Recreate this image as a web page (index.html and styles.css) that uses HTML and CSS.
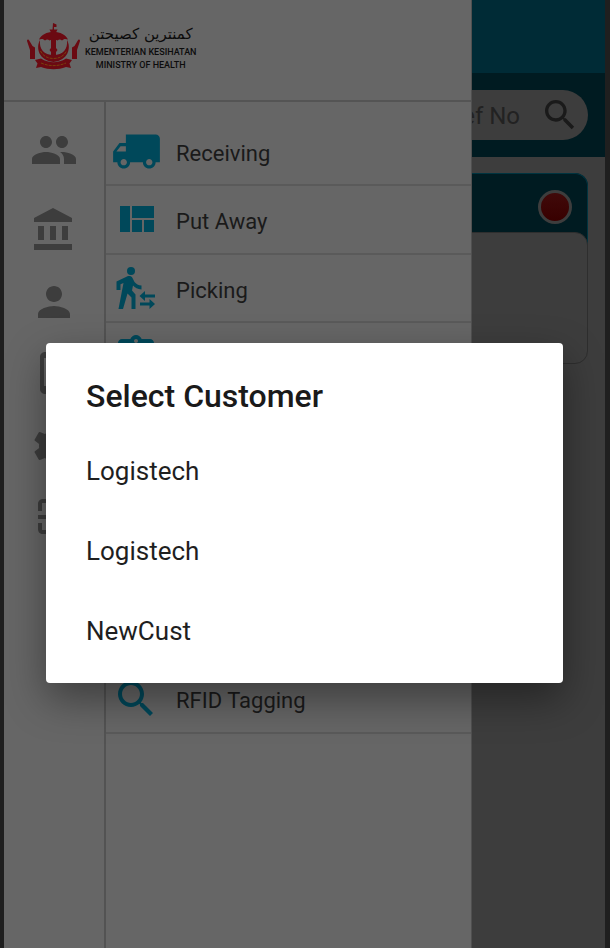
FILE: index.html
```html
<!DOCTYPE html>
<html lang="en">
<head>
<meta charset="utf-8">
<meta name="viewport" content="width=device-width, initial-scale=1">
<title>Select Customer</title>
<link rel="stylesheet" href="styles.css">
</head>
<body>
<div class="app">
  <main class="page">
    <header class="topbar"></header>
    <form class="search">
      <div class="pill">
        <input class="pill-input" type="text" placeholder="Ref No" aria-label="Ref No">
        <button class="pill-button" type="button" aria-label="Search">
          <svg viewBox="0 0 24 24"><path d="M15.5 14h-.79l-.28-.27C15.41 12.59 16 11.11 16 9.500 16 5.910 13.090 3 9.500 3S3 5.910 3 9.500 5.910 16 9.500 16c1.610 0 3.090-.59 4.230-1.570l.27.28v.79l5 4.990L20.490 19l-4.990-5zm-6 0C7.010 14 5 11.990 5 9.500S7.010 5 9.500 5 14 7.010 14 9.500 11.990 14 9.500 14z"/></svg>
        </button>
      </div>
    </form>
    <section class="order">
      <div class="order-head"><span class="status"></span></div>
      <div class="order-body"></div>
    </section>
  </main>

  <aside class="drawer">
    <div class="brand">
      <svg class="crest" viewBox="0 0 54 48">
        <g class="crest-red">
          <path d="M26 1l3.500 1.500v2.500H27v3h-1.500z"/>
          <path d="M22.500 7.500h8l-1.500 3h-5z"/>
          <path d="M12 17.500c2.500-5 7.500-7.500 14.500-7.500S38.500 12.500 41 17.500c-3-1-4.500-.5-6 1-1.500-1.500-3-1.500-4.500 0-.5-.5-1-.7-1.500-.5V26l1.500 2-1.500 2v7h-5v-7L22.500 28l1.500-2v-8c-.5-.2-1 0-1.500.5-1.500-1.500-3-1.500-4.500 0-1.500-1.500-3-2-6-1z"/>
          <path d="M13 18C8.500 26 12 38.500 26.500 40 41 38.500 44.500 26 40 18c1 9-4 15-13.500 15S12 27 13 18z"/>
          <path d="M8 38l6-1.500c8 5 17 5 25 0l6 1.500-2.500 3.500 1.500 4.500-5-1c-8 3-17 3-25 0l-5 1 1.500-4.500z"/>
          <path d="M0 19c0-1.500 1.500-2 2.200-.5l3.300 5.500 2.500 1.500V37H3v-9z"/>
          <path d="M53 19c0-1.500-1.500-2-2.200-.5L47.500 24 45 25.500V37h5v-9z"/>
        </g>
        <path class="crest-gold" d="M13.500 29c2.500 5 7 7.500 13 7.500s10.500-2.500 13-7.500M14 41c8 3.500 17 3.500 25 0"/>
      </svg>
      <div class="brand-text">
        <span class="jawi" lang="ms-Arab" dir="rtl">كمنترين كصيحتن</span>
        <span class="latin">KEMENTERIAN KESIHATAN</span>
        <span class="latin">MINISTRY OF HEALTH</span>
      </div>
    </div>
    <div class="drawer-body">
      <nav class="rail" aria-label="Sections">
        <a href="#" class="rail-first" aria-label="Customers"><svg viewBox="0 0 24 24"><path d="M16 11c1.660 0 2.990-1.340 2.990-3S17.660 5 16 5s-3 1.340-3 3 1.340 3 3 3zm-8 0c1.660 0 2.990-1.340 2.990-3S9.660 5 8 5 5 6.340 5 8s1.340 3 3 3zm0 2c-2.330 0-7 1.170-7 3.500V19h14v-2.500c0-2.330-4.670-3.500-7-3.500zm8 0c-.29 0-.62.02-.97.05 1.160.84 1.970 1.970 1.970 3.450V19h6v-2.500c0-2.330-4.670-3.500-7-3.500z"/></svg></a>
        <a href="#" aria-label="Warehouse"><svg viewBox="0 0 24 24"><path d="M4 10v7h3v-7H4zm6 0v7h3v-7h-3zM2 22h19v-3H2v3zm14-12v7h3v-7h-3zM11.500 1L2 6v2h19V6l-9.500-5z"/></svg></a>
        <a href="#" aria-label="Profile"><svg viewBox="0 0 24 24"><path d="M12 12c2.210 0 4-1.790 4-4s-1.790-4-4-4-4 1.790-4 4 1.790 4 4 4zm0 2c-2.670 0-8 1.340-8 4v2h16v-2c0-2.660-5.330-4-8-4z"/></svg></a>
        <a href="#" aria-label="Device"><svg viewBox="0 0 24 24"><path d="M15.500 1h-8C6.120 1 5 2.120 5 3.500v16C5 20.880 6.120 22 7.500 22h8c1.380 0 2.500-1.120 2.500-2.500v-16C18 2.120 16.880 1 15.500 1zM16 18H7V4h9v14z"/></svg></a>
        <a href="#" aria-label="Settings"><svg viewBox="0 0 24 24"><path d="M19.430 12.980c.04-.32.07-.64.07-.98s-.03-.66-.07-.98l2.110-1.650c.19-.15.24-.42.12-.64l-2-3.460c-.12-.22-.39-.3-.61-.22l-2.490 1c-.52-.4-1.080-.73-1.690-.98l-.38-2.650C14.460 2.180 14.250 2 14 2h-4c-.25 0-.46.18-.49.42l-.38 2.650c-.61.25-1.170.59-1.690.98l-2.490-1c-.23-.09-.49 0-.61.22l-2 3.460c-.13.22-.07.49.12.64l2.110 1.650c-.04.32-.07.65-.07.98s.03.66.07.98l-2.110 1.650c-.19.15-.24.42-.12.64l2 3.460c.12.22.39.3.61.22l2.490-1c.52.4 1.080.73 1.690.98l.38 2.650c.03.24.24.42.49.42h4c.25 0 .46-.18.49-.42l.38-2.650c.61-.25 1.170-.59 1.690-.98l2.490 1c.23.09.49 0 .61-.22l2-3.460c.12-.22.07-.49-.12-.64l-2.110-1.650zM12 15.500c-1.930 0-3.500-1.570-3.500-3.500s1.570-3.500 3.500-3.500 3.500 1.570 3.500 3.500-1.570 3.500-3.500 3.500z"/></svg></a>
        <a href="#" aria-label="Scan"><svg viewBox="0 0 24 24"><path d="M4 8.500V5c0-1.400 1-2.500 2.500-2.500H10v2H6V8.500zM4 10.500h16v2H4zM4 14.500h2v3.500h4v2H6.500C5 20 4 19 4 17.500zM14 2.500h3.500C19 2.500 20 3.600 20 5v3.500h-2v-4h-4zM18 14.500h2v3c0 1.500-1 2.500-2.500 2.500H14v-2h4z"/></svg></a>
      </nav>
      <ul class="menu">
        <li><a href="#">
          <svg class="truck" viewBox="0 0 24 24"><path transform="matrix(-1 0 0 1 24 0)" d="M20 8h-3V4H3c-1.100 0-2 .9-2 2v11h2c0 1.660 1.340 3 3 3s3-1.340 3-3h6c0 1.660 1.340 3 3 3s3-1.340 3-3h2v-5l-3-4zM6 18.500c-.83 0-1.500-.67-1.500-1.500s.67-1.500 1.500-1.500 1.500.67 1.500 1.500-.67 1.500-1.500 1.500zm13.500-9l1.960 2.500H17V9.500h2.500zm-1.500 9c-.83 0-1.500-.67-1.500-1.500s.67-1.500 1.500-1.500 1.500.67 1.500 1.500-.67 1.500-1.500 1.500z"/></svg>
          <span>Receiving</span></a></li>
        <li><a href="#">
          <svg viewBox="0 0 24 24"><path d="M10 18h5v-6h-5v6zm-6 0h5V5H4v13zm12 0h5v-6h-5v6zM10 5v6h11V5H10z"/></svg>
          <span>Put Away</span></a></li>
        <li><a href="#">
          <svg viewBox="0 0 48 48"><circle cx="19" cy="7" r="4"/><path d="M15 12.500c2-1 4.500-.5 5.500 1.500l2 4c1.500 2 4 3.300 7 3.500v4c-3.800-.3-6.500-1.700-8.500-4l-1 5 3.500 4V45h-4V33.500l-4-4L11 45H6.500l5-26-3 1.200V26h-4v-8.500z"/><path d="M33 27v3.500h10v3H33V37l-5.500-5zM37.500 35l5.500 5-5.500 5v-3.500H28v-3h9.500z"/></svg>
          <span>Picking</span></a></li>
        <li><a href="#" aria-label="Tasks">
          <svg viewBox="0 0 24 24"><path d="M19 3h-4.180C14.400 1.840 13.300 1 12 1s-2.400.84-2.820 2H5c-1.100 0-2 .9-2 2v14c0 1.100.9 2 2 2h14c1.100 0 2-.9 2-2V5c0-1.100-.9-2-2-2zm-7 0c.55 0 1 .45 1 1s-.45 1-1 1-1-.45-1-1 .45-1 1-1z"/></svg></a></li>
        <li></li>
        <li></li>
        <li></li>
        <li></li>
        <li><a href="#">
          <svg viewBox="0 0 24 24"><path d="M15.500 14h-.79l-.28-.27C15.410 12.590 16 11.110 16 9.500 16 5.910 13.090 3 9.500 3S3 5.910 3 9.500 5.910 16 9.500 16c1.610 0 3.090-.59 4.230-1.570l.27.28v.79l5 4.990L20.490 19l-4.990-5zm-6 0C7.010 14 5 11.990 5 9.500S7.010 5 9.500 5 14 7.010 14 9.500 11.990 14 9.500 14z"/></svg>
          <span>RFID Tagging</span></a></li>
      </ul>
    </div>
  </aside>

  <div class="dialog" role="dialog" aria-labelledby="dialog-title">
    <h1 id="dialog-title">Select Customer</h1>
    <button type="button">Logistech</button>
    <button type="button">Logistech</button>
    <button type="button">NewCust</button>
  </div>
</div>
</body>
</html>
```
FILE: styles.css
```css
* {
  box-sizing: border-box;
}

body {
  margin: 0;
  background: #1f1f1f;
  color: #1a1a1a;
  font-family: Roboto, "Liberation Sans", sans-serif;
}

a {
  color: inherit;
  text-decoration: none;
}

svg {
  display: block;
  fill: currentColor;
}

.app {
  position: relative;
  min-height: 100vh;
  margin: 0 5px 0 4px;
  overflow: hidden;
  background: #3d3d3d;
}

/* Page behind the drawer */
.topbar {
  height: 73px;
  background: #002b36;
}

.search {
  padding: 17px;
  background: #001b21;
}

.pill {
  display: flex;
  align-items: center;
  height: 50px;
  padding-right: 8px;
  border-radius: 25px;
  background: #3d3d3d;
}

.pill-input {
  flex: 1;
  min-width: 0;
  padding: 2px 20px 0 0;
  border: 0;
  background: none;
  color: #222;
  font: 24px Roboto, "Liberation Sans", sans-serif;
  text-align: right;
}

.pill-input::placeholder {
  color: #222;
  opacity: 1;
}

.pill-button {
  padding: 0;
  border: 0;
  background: none;
  color: #1a1a1a;
}

.pill-button svg {
  width: 40px;
  height: 40px;
}

.order {
  margin: 16px 17px;
  border-radius: 13px;
  background: linear-gradient(#001b21 80px, #3d3d3d 110px);
}

.order-head {
  display: flex;
  justify-content: flex-end;
  height: 72px;
  margin-bottom: -13px;
  padding: 16px 15px;
  border: solid #003440;
  border-width: 1px 1px 0;
  border-radius: 13px 13px 0 0;
}

.status {
  width: 34px;
  height: 34px;
  border: 3px solid #3d3d3d;
  border-radius: 50%;
  background: linear-gradient(#400a0a, #380000);
}

.order-body {
  height: 132px;
  border: 1px solid #2e2e2e;
  border-radius: 13px;
  background: #3d3d3d;
}

/* Drawer */
.drawer {
  position: absolute;
  inset: 0 auto 0 0;
  display: flex;
  flex-direction: column;
  width: 78%;
  max-width: 468px;
  border-right: 1px solid #505050;
  background: #666;
}

.brand {
  display: flex;
  align-items: flex-start;
  gap: 4px;
  height: 102px;
  padding: 22px 23px;
  border-bottom: 2px solid #545454;
}

.crest {
  width: 54px;
  height: 48px;
}

.crest-red {
  fill: #6b0a12;
}

.crest-gold {
  fill: none;
  stroke: #77420d;
  stroke-dasharray: 3 1;
}

.brand-text {
  display: flex;
  flex-direction: column;
  align-items: center;
  color: #0c0c0c;
}

.jawi {
  height: 24px;
  font: 15px/24px "DejaVu Sans", sans-serif;
}

.latin {
  font-size: 9px;
  font-weight: 500;
  line-height: 13px;
}

.drawer-body {
  display: flex;
  flex: 1;
}

.rail {
  display: flex;
  flex-direction: column;
  align-items: center;
  gap: 24px;
  width: 102px;
  padding-top: 24px;
  border-right: 2px solid #535353;
  color: #3d3d3d;
}

.rail-first {
  margin-bottom: 8px;
}

.rail svg {
  width: 48px;
  height: 48px;
}

.menu {
  display: grid;
  flex: 1;
  grid-template-rows: repeat(9, 1fr);
  height: 632px;
  margin: 0;
  padding: 16px 0 0;
  list-style: none;
}

.menu li {
  border-bottom: 2px solid #5a5a5a;
}

.menu a {
  display: grid;
  grid-template-columns: 60px 1fr;
  align-items: center;
  gap: 10px;
  height: 100%;
  font-size: 22px;
}

.menu span {
  padding-top: 4px;
}

.menu svg {
  justify-self: center;
  width: 48px;
  height: 48px;
  color: #00485a;
}

.menu .truck {
  width: 51px;
  height: 51px;
}

/* Dialog */
.dialog {
  position: absolute;
  top: 343px;
  right: 42px;
  left: 42px;
  padding: 28px 0 12px;
  border-radius: 4px;
  background: #fff;
  box-shadow: 0 16px 40px rgba(0, 0, 0, 0.4);
}

.dialog h1 {
  margin: 0 40px 10px;
  font-size: 32px;
  font-weight: 500;
  line-height: 50px;
}

.dialog button {
  display: block;
  width: 100%;
  height: 80px;
  padding: 0 40px;
  border: 0;
  background: none;
  color: #1f1f1f;
  font: 26px Roboto, "Liberation Sans", sans-serif;
  text-align: left;
}
```
